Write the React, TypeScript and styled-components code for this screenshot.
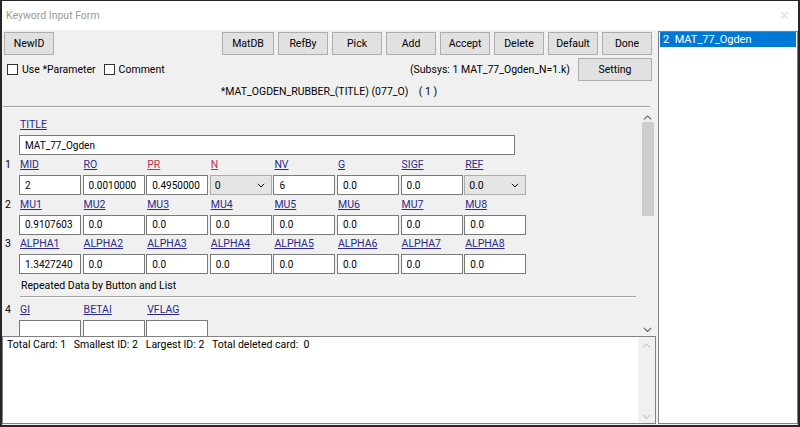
import React from 'react';
import styled, { createGlobalStyle } from 'styled-components';

const GlobalStyle = createGlobalStyle`
    html, body {
        margin: 0;
        padding: 0;
        width: 800px;
        height: 427px;
        overflow: hidden;
        background: #ffffff;
    }
    * {
        box-sizing: border-box;
    }
`;

const FONT = `"Segoe UI", Roboto, "Noto Sans", sans-serif`;

const Window = styled.div`
    width: 800px;
    height: 427px;
    display: flex;
    flex-direction: column;
    border: 2px solid #262626;
    border-top-width: 1px;
    font-family: ${FONT};
    font-size: 10.5px;
    color: #000;
    background: #f0f0f0;
`;

const TitleBar = styled.div`
    height: 29px;
    flex: none;
    display: flex;
    align-items: center;
    justify-content: space-between;
    padding: 0 8px 0 4px;
    background: #ffffff;
`;

const TitleText = styled.span`
    font-size: 10.5px;
    color: #9a9a9a;
`;

const CloseGlyph = styled.span`
    font-size: 13px;
    color: #e2e2e2;
`;

const Body = styled.div`
    flex: 1;
    display: flex;
    gap: 2px;
    padding: 1px 0 1px 0;
    min-height: 0;
`;

const Main = styled.div`
    width: 654px;
    display: flex;
    flex-direction: column;
    min-height: 0;
`;

const Toolbar = styled.div`
    display: flex;
    justify-content: space-between;
    margin-top: 1px;
    padding: 0 4px 0 2px;
`;

const ButtonGroup = styled.div`
    display: flex;
    gap: 4px;
`;

const Btn = styled.button<{ $w?: number }>`
    width: ${(p) => p.$w ?? 50}px;
    height: 23px;
    padding: 0;
    background: #e1e1e1;
    border: 1px solid #adadad;
    font-family: ${FONT};
    font-size: 10.5px;
    color: #000;
`;

const OptionsRow = styled.div`
    display: flex;
    align-items: center;
    height: 22px;
    margin-top: 3px;
    padding: 0 4px 0 5px;
`;

const CheckLabel = styled.label`
    display: flex;
    align-items: center;
    gap: 4px;
    margin-right: 8px;
`;

const CheckBox = styled.span`
    width: 11px;
    height: 11px;
    background: #fff;
    border: 1px solid #333;
`;

const SubsysText = styled.span`
    margin-left: auto;
    margin-right: 8px;
`;

const Heading = styled.div`
    height: 16px;
    margin-top: 4px;
    text-align: center;
    line-height: 16px;
`;

const Divider = styled.div<{ $left: number; $right: number; $top: number }>`
    height: 2px;
    margin: ${(p) => p.$top}px ${(p) => p.$right}px 0 ${(p) => p.$left}px;
    border-top: 1px solid #a0a0a0;
    border-bottom: 1px solid #ffffff;
`;

const ScrollArea = styled.div`
    flex: 1;
    display: flex;
    margin-top: 1px;
    min-height: 0;
    overflow: hidden;
`;

const Content = styled.div`
    flex: 1;
    padding: 9px 0 0 2px;
    overflow: hidden;
`;

const VScroll = styled.div<{ $disabled?: boolean }>`
    width: 17px;
    flex: none;
    display: flex;
    flex-direction: column;
    align-items: center;
    background: #f0f0f0;
    padding: 6px 0 4px;
    color: ${(p) => (p.$disabled ? '#c4c4c4' : '#606060')};
`;

const Thumb = styled.div`
    width: 12px;
    height: 94px;
    margin-top: 2px;
    background: #cdcdcd;
`;

const ScrollGap = styled.div`
    flex: 1;
`;

const Block = styled.div<{ $top?: number }>`
    display: flex;
    margin-top: ${(p) => p.$top ?? 0}px;
`;

const RowNum = styled.div`
    width: 15px;
    flex: none;
    padding-left: 1px;
    line-height: 14px;
`;

const Grid = styled.div`
    display: grid;
    grid-template-columns: repeat(8, 62px);
    column-gap: 1.6px;
    row-gap: 3px;
`;

const Column = styled.div`
    display: flex;
    flex-direction: column;
    gap: 3px;
`;

const FieldLabel = styled.span<{ $req?: boolean }>`
    height: 14px;
    line-height: 14px;
    padding-left: 1px;
    color: ${(p) => (p.$req ? '#c4314b' : '#2a2a8c')};
    text-decoration: underline;
    white-space: nowrap;
`;

const FieldInput = styled.input<{ $w?: number }>`
    width: ${(p) => p.$w ?? 62}px;
    height: 20px;
    padding: 0 0 0 5px;
    margin: 0;
    border: 1px solid #7a7a7a;
    background: #ffffff;
    font-family: ${FONT};
    font-size: 10px;
    color: #000;
    outline: none;
`;

const SelectBox = styled.div`
    width: 62px;
    height: 20px;
    display: flex;
    align-items: center;
    justify-content: space-between;
    padding: 0 6px 0 4px;
    background: #e5e5e5;
    border: 1px solid #acacac;
    font-size: 10.5px;
`;

const Note = styled.div`
    margin: 5px 0 0 17px;
    height: 14px;
    line-height: 14px;
`;

const LogArea = styled.div`
    height: 88px;
    flex: none;
    display: flex;
    background: #ffffff;
    border: 1px solid #828282;
`;

const LogText = styled.div`
    flex: 1;
    padding: 1px 0 0 4px;
    white-space: pre;
`;

const ListPanel = styled.div`
    width: 140px;
    background: #ffffff;
    border: 1px solid #828282;
    padding: 0 1px;
`;

const ListItem = styled.div<{ $selected?: boolean }>`
    height: 15px;
    line-height: 15px;
    padding-left: 3px;
    font-size: 11px;
    white-space: pre;
    background: ${(p) => (p.$selected ? '#0078d7' : 'transparent')};
    color: ${(p) => (p.$selected ? '#ffffff' : '#000000')};
`;

const Chevron = ({ up, size = 9 }: { up?: boolean; size?: number }) => (
    <svg width={size} height={size * 0.6} viewBox="0 0 10 6">
        <path
            d={up ? 'M1 5 L5 1 L9 5' : 'M1 1 L5 5 L9 1'}
            fill="none"
            stroke="currentColor"
            strokeWidth="1.2"
        />
    </svg>
);

type Field = { label: string; value?: string; req?: boolean; select?: boolean };

const rows: { num: string; fields: Field[] }[] = [
    {
        num: '1',
        fields: [
            { label: 'MID', value: '2' },
            { label: 'RO', value: '0.0010000' },
            { label: 'PR', value: '0.4950000', req: true },
            { label: 'N', value: '0', req: true, select: true },
            { label: 'NV', value: '6' },
            { label: 'G', value: '0.0' },
            { label: 'SIGF', value: '0.0' },
            { label: 'REF', value: '0.0', select: true },
        ],
    },
    {
        num: '2',
        fields: ['MU1', 'MU2', 'MU3', 'MU4', 'MU5', 'MU6', 'MU7', 'MU8'].map((l, i) => ({
            label: l,
            value: i === 0 ? '0.9107603' : '0.0',
        })),
    },
    {
        num: '3',
        fields: ['ALPHA1', 'ALPHA2', 'ALPHA3', 'ALPHA4', 'ALPHA5', 'ALPHA6', 'ALPHA7', 'ALPHA8'].map((l, i) => ({
            label: l,
            value: i === 0 ? '1.3427240' : '0.0',
        })),
    },
];

const repeated: Field[] = [{ label: 'GI' }, { label: 'BETAI' }, { label: 'VFLAG' }];

const FieldCell = ({ f }: { f: Field }) => (
    <Column>
        <FieldLabel $req={f.req}>{f.label}</FieldLabel>
        {f.select ? (
            <SelectBox>
                <span>{f.value}</span>
                <Chevron size={8} />
            </SelectBox>
        ) : (
            <FieldInput readOnly value={f.value ?? ''} />
        )}
    </Column>
);

export default function App() {
    return (
        <Window>
            <GlobalStyle />
            <TitleBar>
                <TitleText>Keyword Input Form</TitleText>
                <CloseGlyph>✕</CloseGlyph>
            </TitleBar>
            <Body>
                <Main>
                    <Toolbar>
                        <Btn>NewID</Btn>
                        <ButtonGroup>
                            <Btn $w={52}>MatDB</Btn>
                            <Btn>RefBy</Btn>
                            <Btn>Pick</Btn>
                            <Btn>Add</Btn>
                            <Btn>Accept</Btn>
                            <Btn>Delete</Btn>
                            <Btn>Default</Btn>
                            <Btn>Done</Btn>
                        </ButtonGroup>
                    </Toolbar>
                    <OptionsRow>
                        <CheckLabel>
                            <CheckBox />
                            Use *Parameter
                        </CheckLabel>
                        <CheckLabel>
                            <CheckBox />
                            Comment
                        </CheckLabel>
                        <SubsysText>(Subsys: 1 MAT_77_Ogden_N=1.k)</SubsysText>
                        <Btn $w={74}>Setting</Btn>
                    </OptionsRow>
                    <Heading>*MAT_OGDEN_RUBBER_(TITLE) (077_O)&nbsp;&nbsp;&nbsp;&nbsp;( 1 )</Heading>
                    <Divider $top={6} $left={1} $right={6} />
                    <ScrollArea>
                        <Content>
                            <Block>
                                <RowNum />
                                <Column>
                                    <FieldLabel>TITLE</FieldLabel>
                                    <FieldInput readOnly value="MAT_77_Ogden" $w={496} />
                                </Column>
                            </Block>
                            {rows.map((r, i) => (
                                <Block key={r.num} $top={i === 0 ? 3 : 2.5}>
                                    <RowNum>{r.num}</RowNum>
                                    <Grid>
                                        {r.fields.map((f) => (
                                            <FieldCell key={f.label} f={f} />
                                        ))}
                                    </Grid>
                                </Block>
                            ))}
                            <Note>Repeated Data by Button and List</Note>
                            <Divider $top={3} $left={16} $right={3} />
                            <Block $top={5}>
                                <RowNum>4</RowNum>
                                <Grid>
                                    {repeated.map((f) => (
                                        <FieldCell key={f.label} f={f} />
                                    ))}
                                </Grid>
                            </Block>
                        </Content>
                        <VScroll>
                            <Chevron up />
                            <Thumb />
                            <ScrollGap />
                            <Chevron />
                        </VScroll>
                    </ScrollArea>
                    <LogArea>
                        <LogText>Total Card: 1   Smallest ID: 2   Largest ID: 2   Total deleted card:  0</LogText>
                        <VScroll $disabled>
                            <Chevron up />
                            <ScrollGap />
                            <Chevron />
                        </VScroll>
                    </LogArea>
                </Main>
                <ListPanel>
                    <ListItem $selected>2  MAT_77_Ogden</ListItem>
                </ListPanel>
            </Body>
        </Window>
    );
}
